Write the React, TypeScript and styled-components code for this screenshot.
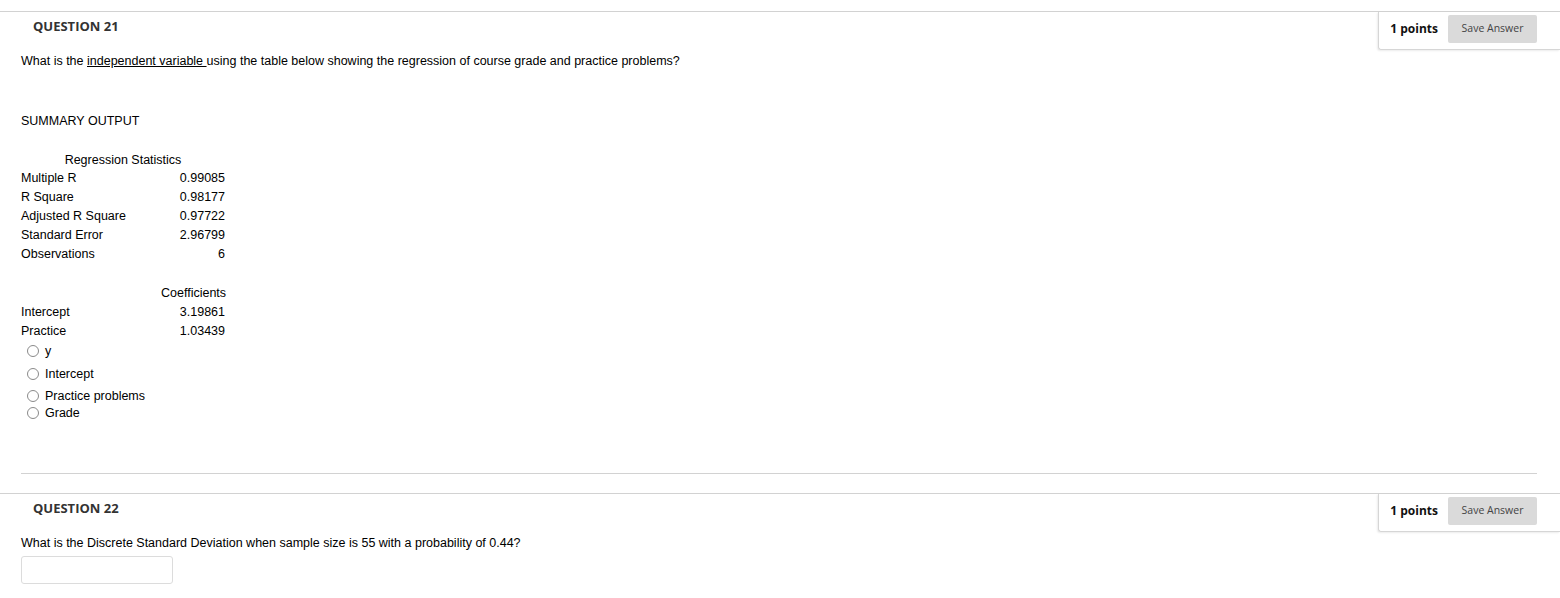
import React from "react";
import styled, { createGlobalStyle } from "styled-components";

const Global = createGlobalStyle`
  html, body { margin: 0; padding: 0; background: #fff; }
  body { font-family: Arial, "Liberation Sans", sans-serif; color: #000; }
`;

const Page = styled.div`
  padding-top: 11px;
  width: 1560px;
`;

const Block = styled.section`
  border-top: 1px solid #d2d2d2;
`;

const Header = styled.div`
  display: flex;
  justify-content: space-between;
  align-items: flex-start;
`;

const Title = styled.h3`
  margin: 0;
  padding: 5px 0 0 33px;
  font-family: "Open Sans", sans-serif;
  font-size: 13px;
  line-height: 18px;
  font-weight: 700;
  color: #333;
`;

const PointsBox = styled.div`
  display: flex;
  align-items: center;
  gap: 10px;
  padding: 3px 23px 6px 11px;
  border-left: 1px solid #d6d6d6;
  border-bottom: 1px solid #d6d6d6;
  border-bottom-left-radius: 3px;
  box-shadow: -1px 1px 2px rgba(0, 0, 0, 0.08);
`;

const Points = styled.span`
  font-family: "Open Sans", sans-serif;
  font-size: 12px;
  line-height: 16px;
  font-weight: 700;
  color: #111;
  white-space: nowrap;
  margin-top: -1px;
`;

const SaveButton = styled.button`
  width: 89px;
  height: 28px;
  border: none;
  border-radius: 2px;
  background: #dadada;
  font-family: "Open Sans", sans-serif;
  font-size: 10.5px;
  line-height: 14px;
  color: #444;
  padding: 0 0 2px;
  cursor: pointer;
`;

const Body = styled.div`
  padding: 4px 23px 0 21px;
  font-size: 12.5px;
`;

const Prompt = styled.p`
  margin: 0;
  line-height: 15px;
  font-size: 12.5px;
`;

const Under = styled.span`
  text-decoration: underline;
`;

const Summary = styled.p`
  margin: 45px 0 0;
  line-height: 15px;
`;

const Table = styled.table<{ $top: number }>`
  border-collapse: collapse;
  margin-top: ${(p) => p.$top}px;
  font-size: 12.5px;
  width: 204px;
  table-layout: fixed;
`;

const Row = styled.tr<{ $h?: number }>`
  height: ${(p) => p.$h ?? 19}px;
`;

const Label = styled.td`
  padding: 0;
  width: 140px;
  white-space: nowrap;
  vertical-align: middle;
`;

const Value = styled.td<{ $center?: boolean }>`
  padding: 0;
  text-align: ${(p) => (p.$center ? "center" : "right")};
  white-space: nowrap;
  vertical-align: middle;
`;

const Options = styled.ul`
  list-style: none;
  margin: 0;
  padding: 0;
`;

const Option = styled.li<{ $gap: number }>`
  margin-top: ${(p) => p.$gap}px;
  height: 17px;
  display: flex;
  align-items: center;
  font-size: 12.5px;
`;

const Radio = styled.span`
  box-sizing: border-box;
  width: 12px;
  height: 12px;
  margin: 0 6px 0 6px;
  border: 1px solid #8a8a8a;
  border-radius: 50%;
  background: #fff;
  flex: none;
`;

const Divider = styled.hr`
  margin: 52px 23px 19px 21px;
  border: none;
  border-top: 1px solid #d2d2d2;
  height: 0;
`;

const AnswerInput = styled.input`
  display: block;
  margin-top: 5px;
  width: 152px;
  height: 28px;
  box-sizing: border-box;
  border: 1px solid #dcdcdc;
  border-radius: 3px;
  background: #fff;
`;

const stats: [string, string][] = [
  ["Multiple R", "0.99085"],
  ["R Square", "0.98177"],
  ["Adjusted R Square", "0.97722"],
  ["Standard Error", "2.96799"],
  ["Observations", "6"],
];

const options: [string, number][] = [
  ["y", 2],
  ["Intercept", 6],
  ["Practice problems", 5],
  ["Grade", 0],
];

function QHeader({ title }: { title: string }) {
  return (
    <Header>
      <Title>{title}</Title>
      <PointsBox>
        <Points>1 points</Points>
        <SaveButton>Save Answer</SaveButton>
      </PointsBox>
    </Header>
  );
}

export default function App() {
  return (
    <Page>
      <Global />
      <Block>
        <QHeader title="QUESTION 21" />
        <Body>
          <Prompt>
            What is the <Under>independent variable </Under>using the table below showing the
            regression of course grade and practice problems?
          </Prompt>
          <Summary>SUMMARY OUTPUT</Summary>
          <Table $top={22}>
            <tbody>
              <Row $h={17}>
                <Value colSpan={2} $center>
                  Regression Statistics
                </Value>
              </Row>
              {stats.map(([l, v]) => (
                <Row key={l}>
                  <Label>{l}</Label>
                  <Value>{v}</Value>
                </Row>
              ))}
            </tbody>
          </Table>
          <Table $top={20}>
            <tbody>
              <Row>
                <Label />
                <Value>Coefficients</Value>
              </Row>
              <Row>
                <Label>Intercept</Label>
                <Value>3.19861</Value>
              </Row>
              <Row>
                <Label>Practice</Label>
                <Value>1.03439</Value>
              </Row>
            </tbody>
          </Table>
          <Options>
            {options.map(([o, g]) => (
              <Option key={o} $gap={g}>
                <Radio role="radio" aria-checked="false" />
                <span>{o}</span>
              </Option>
            ))}
          </Options>
        </Body>
      </Block>
      <Divider />
      <Block>
        <QHeader title="QUESTION 22" />
        <Body>
          <Prompt>
            What is the Discrete Standard Deviation when sample size is 55 with a probability of
            0.44?
          </Prompt>
          <AnswerInput type="text" />
        </Body>
      </Block>
    </Page>
  );
}
